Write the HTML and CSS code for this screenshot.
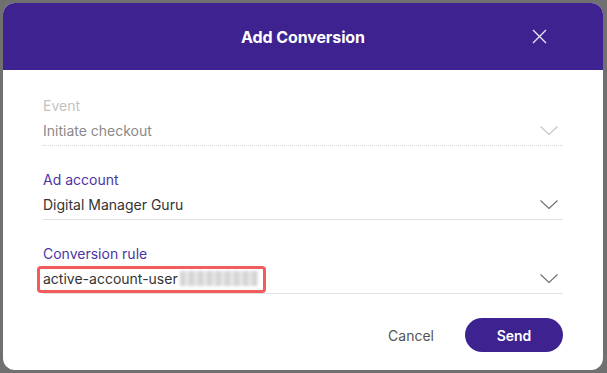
FILE: index.html
```html
<!DOCTYPE html>
<html lang="en">
<head>
<meta charset="UTF-8">
<meta name="viewport" content="width=device-width, initial-scale=1.0">
<title>Add Conversion</title>
<link rel="stylesheet" href="styles.css">
</head>
<body>

<div class="modal">
    <div class="modal-header">
        <h1>Add Conversion</h1>
        <button class="close-btn" aria-label="Close">
            <svg width="15" height="15" viewBox="0 0 15 15"><path d="M1 1L14 14M14 1L1 14" stroke="#e8e4f6" stroke-width="1.4" fill="none"/></svg>
        </button>
    </div>

    <div class="modal-body">
        <div class="field disabled">
            <label>Event</label>
            <div class="select">
                <span class="value">Initiate checkout</span>
                <svg class="chevron" width="18" height="10" viewBox="0 0 18 10"><path d="M0.5 0.5L9 8.5L17.5 0.5" stroke="#c4c4c4" stroke-width="1.1" fill="none"/></svg>
            </div>
        </div>

        <div class="field">
            <label>Ad account</label>
            <div class="select">
                <span class="value">Digital Manager Guru</span>
                <svg class="chevron" width="18" height="10" viewBox="0 0 18 10"><path d="M0.5 0.5L9 8.5L17.5 0.5" stroke="#6f6f6f" stroke-width="1.1" fill="none"/></svg>
            </div>
        </div>

        <div class="field">
            <label>Conversion rule</label>
            <div class="select">
                <span class="value"><span class="highlight">active-account-user <span class="blurred"></span></span></span>
                <svg class="chevron" width="18" height="10" viewBox="0 0 18 10"><path d="M0.5 0.5L9 8.5L17.5 0.5" stroke="#6f6f6f" stroke-width="1.1" fill="none"/></svg>
            </div>
        </div>

        <div class="actions">
            <button class="btn-cancel">Cancel</button>
            <button class="btn-send">Send</button>
        </div>
    </div>
</div>

</body>
</html>
```

FILE: styles.css
```css
body {
    margin: 0;
    padding: 3px;
    background-color: #707070;
    font-family: Inter, "Noto Sans", sans-serif;
}
.modal {
    width: 600px;
    height: 367px;
    background-color: #fff;
    border-radius: 12px;
    overflow: hidden;
    display: flex;
    flex-direction: column;
}
.modal-header {
    height: 68px;
    background-color: #3d2290;
    display: flex;
    align-items: center;
    justify-content: center;
    position: relative;
}
.modal-header h1 {
    margin: 0;
    color: #fff;
    font-size: 16px;
    font-weight: 700;
    letter-spacing: -0.1px;
}
.close-btn {
    position: absolute;
    right: 56px;
    top: 26px;
    padding: 0;
    border: none;
    background: none;
    cursor: pointer;
    line-height: 0;
}
.modal-body {
    flex: 1;
    padding: 26px 40px 18px;
    display: flex;
    flex-direction: column;
}
.field {
    margin-bottom: 24px;
}
.field label {
    display: block;
    font-size: 14px;
    line-height: 20px;
    color: #4b35a3;
}
.select {
    display: flex;
    align-items: center;
    justify-content: space-between;
    margin-top: 5px;
    padding-bottom: 4px;
    border-bottom: 1px solid #e2e2e2;
    height: 20px;
}
.value {
    font-size: 14px;
    line-height: 20px;
    color: #333;
}
.chevron {
    margin-right: 5px;
}
.disabled label {
    color: #c2c2c2;
}
.disabled .value {
    color: #8a8a8a;
}
.disabled .select {
    border-bottom: 1px dotted #d6d6d6;
}
.highlight {
    display: inline-block;
    border: 3px solid #f25c5c;
    border-radius: 4px;
    padding: 0 5px 1px 3px;
    margin: -4px 0 -4px -6px;
}
.blurred {
    display: inline-block;
    width: 78px;
    height: 15px;
    vertical-align: -2px;
    margin-left: -2px;
    background: repeating-linear-gradient(90deg, #d4d4d4 0 5px, #e6e6e6 5px 9px);
    filter: blur(1.5px);
}
.actions {
    margin-top: auto;
    display: flex;
    justify-content: flex-end;
    align-items: center;
    gap: 15px;
}
.btn-cancel {
    border: none;
    background: none;
    font-family: inherit;
    font-size: 14px;
    color: #555;
    padding: 8px 16px;
    cursor: pointer;
}
.btn-send {
    width: 98px;
    height: 34px;
    border: none;
    border-radius: 17px;
    background-color: #3d2290;
    color: #fff;
    font-family: inherit;
    font-size: 14px;
    font-weight: 600;
    cursor: pointer;
}
```
